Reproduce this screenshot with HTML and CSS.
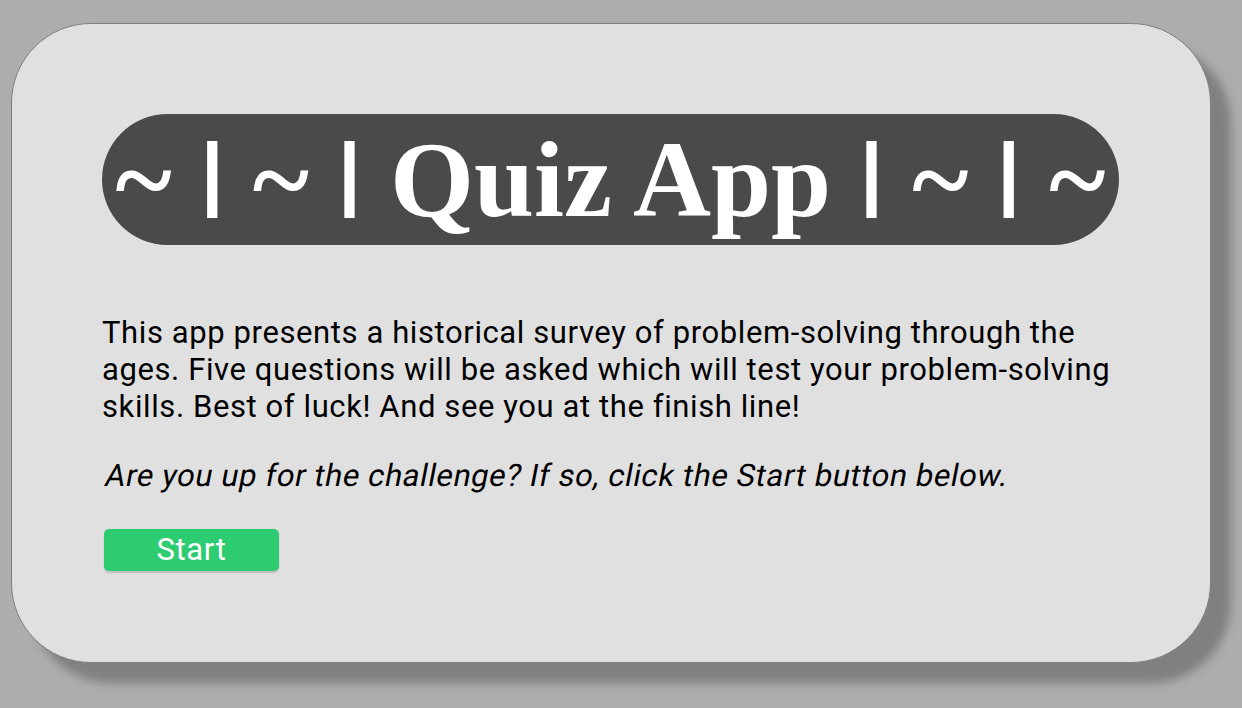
FILE: index.html
```html
<!DOCTYPE html>
<html>
<head>
<meta charset="utf-8">
<link rel="stylesheet" href="styles.css">
</head>
<body>
<main class="card">
  <h1 class="title">~ <span class="bar">|</span> ~ <span class="bar">|</span> Quiz App <span class="bar">|</span> ~ <span class="bar">|</span> ~</h1>
  <p class="intro">This app presents a historical survey of problem-solving through the ages. Five questions will be asked which will test your problem-solving skills. Best of luck! And see you at the finish line!</p>
  <p class="prompt"><span class="oblique">Are you up for the challenge? If so, click the Start button below.</span></p>
  <button class="start">Start</button>
</main>
</body>
</html>
```
FILE: styles.css
```css
html, body {
  margin: 0;
  padding: 0;
  background: #adadad;
  width: 1242px;
  height: 708px;
  overflow: hidden;
}
body {
  padding: 23px 0 0 11px;
  box-sizing: border-box;
}
.card {
  box-sizing: border-box;
  width: 1200px;
  height: 640px;
  background: #e0e0e0;
  border: 1px solid #808080;
  border-radius: 80px;
  box-shadow: 20px 20px 10px #808080;
  padding: 90px 90px 0 90px;
  font-family: Roboto, "Liberation Sans", sans-serif;
  color: #000;
}
.title {
  margin: 0;
  width: 1017px;
  height: 131px;
  box-sizing: border-box;
  background: #4a4a4a;
  border-radius: 66px;
  color: #fff;
  font-family: "Liberation Serif", "Times New Roman", serif;
  font-weight: bold;
  font-size: 108px;
  line-height: 131px;
  text-align: center;
  white-space: nowrap;
}
.bar {
  font-family: "DejaVu Sans", sans-serif;
  font-weight: bold;
  font-size: 74px;
  line-height: 0;
  vertical-align: 17px;
  -webkit-text-stroke: 2px #fff;
}
.intro {
  margin: 69px 0 0 0;
  font-size: 31px;
  letter-spacing: 0.6px;
  line-height: 37px;
  width: 1017px;
}
.prompt {
  margin: 32px 0 0 0;
  font-size: 31px;
  letter-spacing: 0.6px;
  line-height: 37px;
}
.oblique {
  display: inline-block;
  transform: skewX(-11deg);
  transform-origin: 0 100%;
}
.start {
  display: block;
  margin: 35px 0 0 2px;
  width: 175px;
  height: 42px;
  background: #2ecc71;
  color: #fff;
  border: none;
  border-radius: 5px;
  box-shadow: 0 2px 2px #bdbdbd;
  font-family: Roboto, "Liberation Sans", sans-serif;
  font-size: 31px;
  letter-spacing: 0.6px;
  line-height: 42px;
  padding: 0;
}
```
